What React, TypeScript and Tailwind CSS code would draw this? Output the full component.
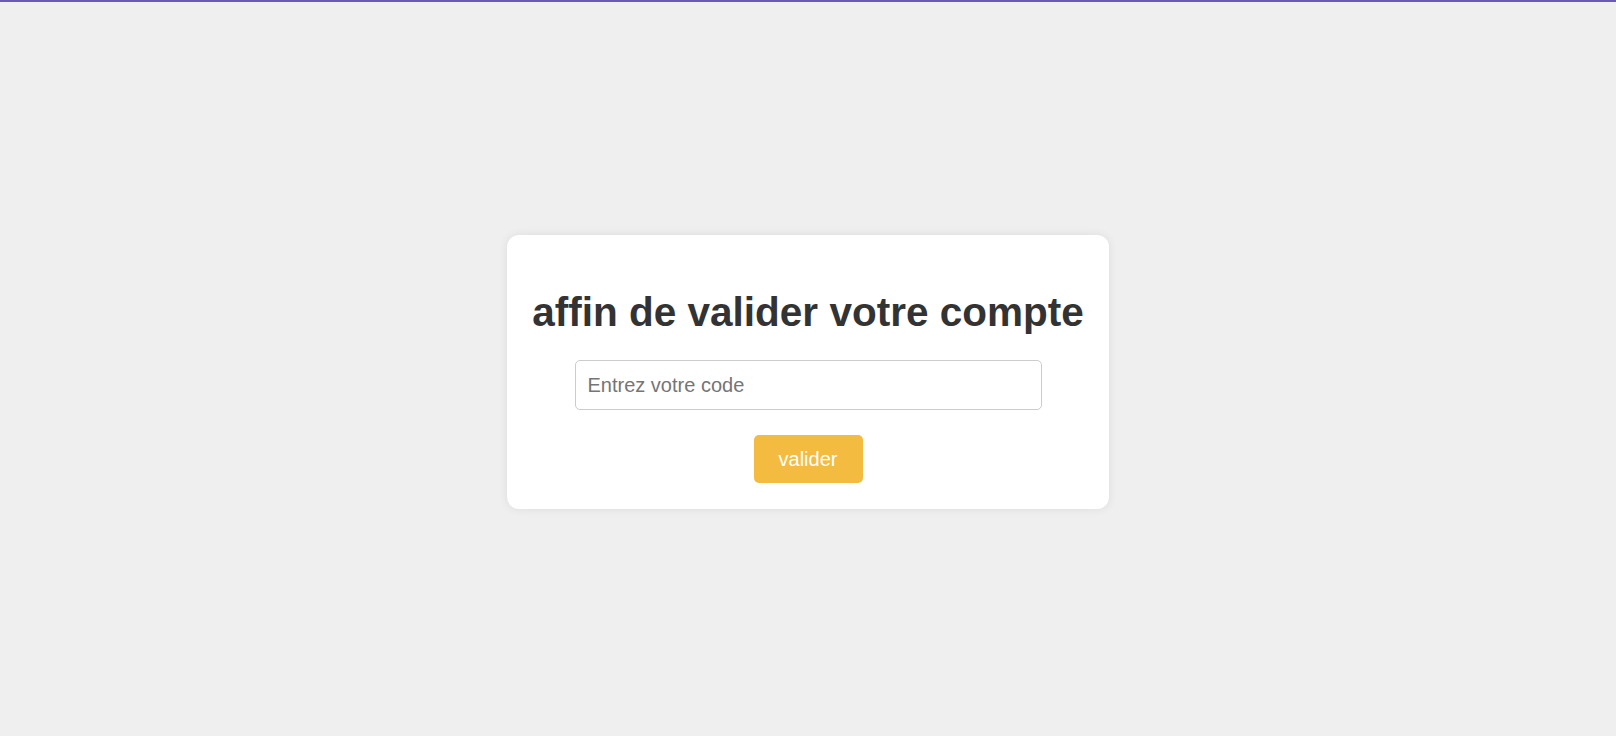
export default function App() {
  return (
    <div className="min-h-screen bg-[#efefef]" style={{ fontFamily: '"Liberation Sans", Arial, sans-serif' }}>
      <div className="h-[2px] bg-[#6a5ab4]" />
      <div className="flex justify-center pt-[233px]">
        <div className="w-[602px] h-[274px] bg-white rounded-[12px] shadow-[0_0_10px_rgba(0,0,0,0.08)] flex flex-col items-center px-[20px]">
          <h1 className="mt-[54px] text-[40.5px] leading-[46px] font-bold text-[#333333] whitespace-nowrap">
            affin de valider votre compte
          </h1>
          <input
            type="text"
            placeholder="Entrez votre code"
            className="mt-[25px] w-[467px] h-[50px] border border-[#cccccc] rounded-[5px] px-[12px] text-[20px] text-[#333] placeholder:text-[#757575] outline-none bg-white"
          />
          <button className="mt-[25px] w-[109px] h-[48px] rounded-[5px] bg-[#f4bb41] text-white text-[20px]">
            valider
          </button>
        </div>
      </div>
    </div>
  );
}
